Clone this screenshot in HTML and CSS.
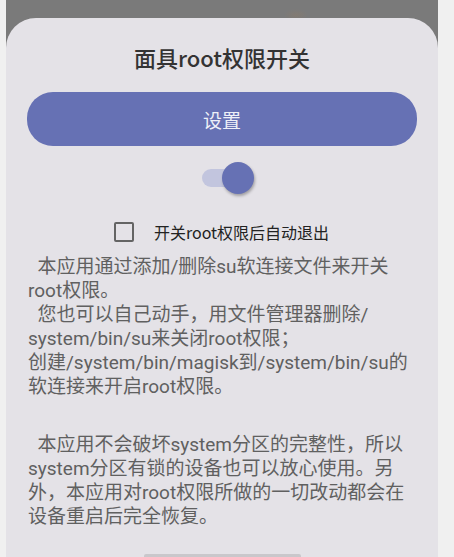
FILE: index.html
```html
<!DOCTYPE html>
<html lang="zh-CN">
<head>
    <meta charset="UTF-8">
    <meta name="viewport" content="width=device-width, initial-scale=1.0">
    <title>面具root权限开关</title>
    <link rel="stylesheet" href="styles.css">
</head>
<body>
    <div class="screen">
        <div class="sheet">
            <h1 class="title">面具root权限开关</h1>
            <button class="setup-btn" type="button">设置</button>

            <div class="switch-row">
                <div class="switch">
                    <span class="switch-track"></span>
                    <span class="switch-thumb"></span>
                </div>
            </div>

            <label class="check-row">
                <span class="checkbox"></span>
                <span class="check-label">开关root权限后自动退出</span>
            </label>

            <p class="info">  本应用通过添加/删除su软连接文件来开关<br>root权限。<br>  您也可以自己动手，用文件管理器删除/<br>system/bin/su来关闭root权限；<br>创建/system/bin/magisk到/system/bin/su的<br>软连接来开启root权限。</p>
            <p class="info second">  本应用不会破坏system分区的完整性，所以<br>system分区有锁的设备也可以放心使用。另<br>外，本应用对root权限所做的一切改动都会在<br>设备重启后完全恢复。</p>

            <div class="handle"></div>
        </div>
    </div>
</body>
</html>
```

FILE: styles.css
```css
body {
    margin: 0;
    background-color: #f0f0f0;
    font-family: Roboto, "Noto Sans CJK SC", sans-serif;
    height: 557px;
    overflow: hidden;
}

.screen {
    margin-left: 6px;
    width: 432px;
    height: 557px;
    padding-top: 18px;
    box-sizing: border-box;
    background: radial-gradient(ellipse 12px 6px at 290px 15px, rgba(170, 125, 80, 0.18), transparent),
                #7a7a7a;
}

.sheet {
    height: 100%;
    background-color: #e4e2e7;
    border-radius: 30px 30px 0 0;
    padding: 0 21px;
    box-sizing: border-box;
    display: flex;
    flex-direction: column;
    overflow: hidden;
}

.title {
    margin: 25px 0 0;
    text-align: center;
    font-family: "Noto Sans CJK SC", sans-serif;
    font-size: 22px;
    line-height: 28px;
    font-weight: 500;
    color: #333;
}

.setup-btn {
    margin-top: 21px;
    height: 54px;
    border: none;
    border-radius: 26px;
    background-color: #6671b4;
    color: #eef0f8;
    font-family: inherit;
    font-size: 19px;
}

.switch-row {
    margin-top: 16px;
    display: flex;
    justify-content: center;
    padding-left: 12px;
}

.switch {
    position: relative;
    width: 52px;
    height: 32px;
}

.switch-track {
    position: absolute;
    left: 0;
    top: 7px;
    width: 46px;
    height: 18px;
    border-radius: 9px;
    background-color: #c2c5de;
}

.switch-thumb {
    position: absolute;
    right: 0;
    top: 0;
    width: 32px;
    height: 32px;
    border-radius: 50%;
    background-color: #6671b4;
    box-shadow: 1px 2px 3px rgba(0, 0, 0, 0.3);
}

.check-row {
    margin-top: 26px;
    height: 24px;
    display: flex;
    align-items: center;
    justify-content: center;
    gap: 20px;
    padding-right: 1px;
}

.checkbox {
    flex: none;
    width: 16px;
    height: 16px;
    border: 2px solid #646464;
    border-radius: 2px;
}

.check-label {
    font-family: "Noto Sans CJK SC", sans-serif;
    font-size: 16px;
    color: #222;
}

.info {
    margin: 11px 0 0;
    padding-left: 1px;
    font-size: 19px;
    line-height: 24px;
    color: #606060;
    white-space: pre-wrap;
}

.info.second {
    margin-top: 34px;
}

.handle {
    margin: auto auto 0;
    width: 157px;
    height: 3px;
    background-color: #c9c7cb;
    border-radius: 2px 2px 0 0;
}
```
